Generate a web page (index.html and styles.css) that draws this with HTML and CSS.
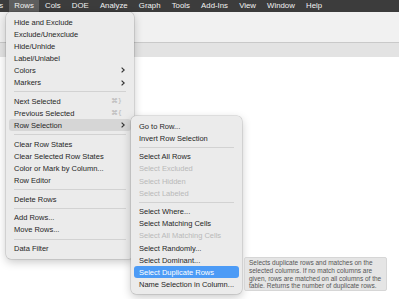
FILE: index.html
```html
<!DOCTYPE html>
<html lang="en">
<head>
  <meta charset="UTF-8">
  <title>Rows menu</title>
  <link rel="stylesheet" href="styles.css">
</head>
<body>
  <!-- App menu bar -->
  <div class="menubar">
    <span class="mb-item first">Tables</span>
    <span class="mb-item active">Rows</span>
    <span class="mb-item">Cols</span>
    <span class="mb-item">DOE</span>
    <span class="mb-item">Analyze</span>
    <span class="mb-item">Graph</span>
    <span class="mb-item">Tools</span>
    <span class="mb-item">Add-Ins</span>
    <span class="mb-item">View</span>
    <span class="mb-item">Window</span>
    <span class="mb-item">Help</span>
  </div>
  <div class="toolbar"></div>
  <div class="band"></div>
  <div class="content"></div>

  <!-- Rows menu -->
  <div class="menu main-menu">
    <div class="item">Hide and Exclude</div>
    <div class="item">Exclude/Unexclude</div>
    <div class="item">Hide/Unhide</div>
    <div class="item">Label/Unlabel</div>
    <div class="item">Colors<svg class="chev" viewBox="0 0 4 6"><polyline points="0.6,0.6 3.2,3 0.6,5.4"/></svg></div>
    <div class="item">Markers<svg class="chev" viewBox="0 0 4 6"><polyline points="0.6,0.6 3.2,3 0.6,5.4"/></svg></div>
    <div class="sep"></div>
    <div class="item">Next Selected<span class="key">⌘}</span></div>
    <div class="item">Previous Selected<span class="key">⌘{</span></div>
    <div class="item hover">Row Selection<svg class="chev" viewBox="0 0 4 6"><polyline points="0.6,0.6 3.2,3 0.6,5.4"/></svg></div>
    <div class="sep"></div>
    <div class="item">Clear Row States</div>
    <div class="item">Clear Selected Row States</div>
    <div class="item">Color or Mark by Column...</div>
    <div class="item">Row Editor</div>
    <div class="sep"></div>
    <div class="item">Delete Rows</div>
    <div class="sep"></div>
    <div class="item">Add Rows...</div>
    <div class="item">Move Rows...</div>
    <div class="sep"></div>
    <div class="item">Data Filter</div>
  </div>

  <!-- Row Selection submenu -->
  <div class="menu sub-menu">
    <div class="item">Go to Row...</div>
    <div class="item">Invert Row Selection</div>
    <div class="sep"></div>
    <div class="item">Select All Rows</div>
    <div class="item disabled">Select Excluded</div>
    <div class="item disabled">Select Hidden</div>
    <div class="item disabled">Select Labeled</div>
    <div class="sep"></div>
    <div class="item">Select Where...</div>
    <div class="item">Select Matching Cells</div>
    <div class="item disabled">Select All Matching Cells</div>
    <div class="item">Select Randomly...</div>
    <div class="item">Select Dominant...</div>
    <div class="item selected">Select Duplicate Rows</div>
    <div class="item">Name Selection in Column...</div>
  </div>

  <!-- Tooltip -->
  <div class="tooltip">
    Selects duplicate rows and matches on the<br>
    selected columns. If no match columns are<br>
    given, rows are matched on all columns of the<br>
    table. Returns the number of duplicate rows.
  </div>
</body>
</html>
```

FILE: styles.css
```css
/* Reset */
* {
  margin: 0;
  padding: 0;
  box-sizing: border-box;
}

body {
  font-family: 'Liberation Sans', Arial, sans-serif;
  width: 399px;
  height: 299px;
  overflow: hidden;
  background: #fff;
  position: relative;
}

/* Menu bar */
.menubar {
  height: 12px;
  background: #3c3c3c;
  display: flex;
  align-items: stretch;
  white-space: nowrap;
  overflow: hidden;
}

.mb-item {
  color: #f2f2f2;
  font-size: 7.8px;
  line-height: 12px;
  padding: 0 5.6px;
}

.mb-item.first {
  margin-left: -25px;
}

.mb-item.active {
  background: #5e5e5e;
}

/* Window chrome under the menu bar */
.toolbar {
  height: 31px;
  background: #f1f1f1;
  border-bottom: 1px solid #c9c9c9;
}

.band {
  height: 14px;
  background: #e3e3e3;
}

/* Menus */
.menu {
  position: absolute;
  background: #ebebeb;
  border-radius: 5px;
  padding: 4px 0;
  box-shadow: 0 0 0 0.5px rgba(0, 0, 0, 0.18), 0 3px 10px rgba(0, 0, 0, 0.22);
}

.main-menu {
  left: 6px;
  top: 12px;
  width: 128px;
}

.sub-menu {
  left: 131px;
  top: 116px;
  width: 111px;
}

.item {
  height: 12.1px;
  margin: 0 3px;
  padding: 0 6px 0 5px;
  border-radius: 3px;
  display: flex;
  align-items: center;
  font-size: 7.5px;
  color: #262626;
  white-space: nowrap;
}

.item.hover {
  background: #d6d6d6;
}

.item.selected {
  background: #4c9bf6;
  color: #fff;
}

.item.disabled {
  color: #b9b9b9;
}

.chev {
  margin-left: auto;
  width: 4px;
  height: 6px;
}

.chev polyline {
  fill: none;
  stroke: #333;
  stroke-width: 1.2;
}

.key {
  margin-left: auto;
  padding-right: 3px;
  color: #b4b4b4;
  font-family: 'DejaVu Sans', sans-serif;
  font-size: 6.5px;
}

.sep {
  height: 6.6px;
  display: flex;
  align-items: center;
  margin: 0 8px;
}

.sep::before {
  content: "";
  flex: 1;
  height: 1px;
  background: #d2d2d2;
}

/* Tooltip */
.tooltip {
  position: absolute;
  left: 244px;
  top: 257px;
  width: 143px;
  height: 34px;
  padding: 1px 4px 3px;
  background: #e5e5e5;
  border: 1px solid #d6d6d6;
  border-radius: 2px;
  font-size: 6.5px;
  line-height: 7.8px;
  color: #555;
  white-space: nowrap;
}
```
